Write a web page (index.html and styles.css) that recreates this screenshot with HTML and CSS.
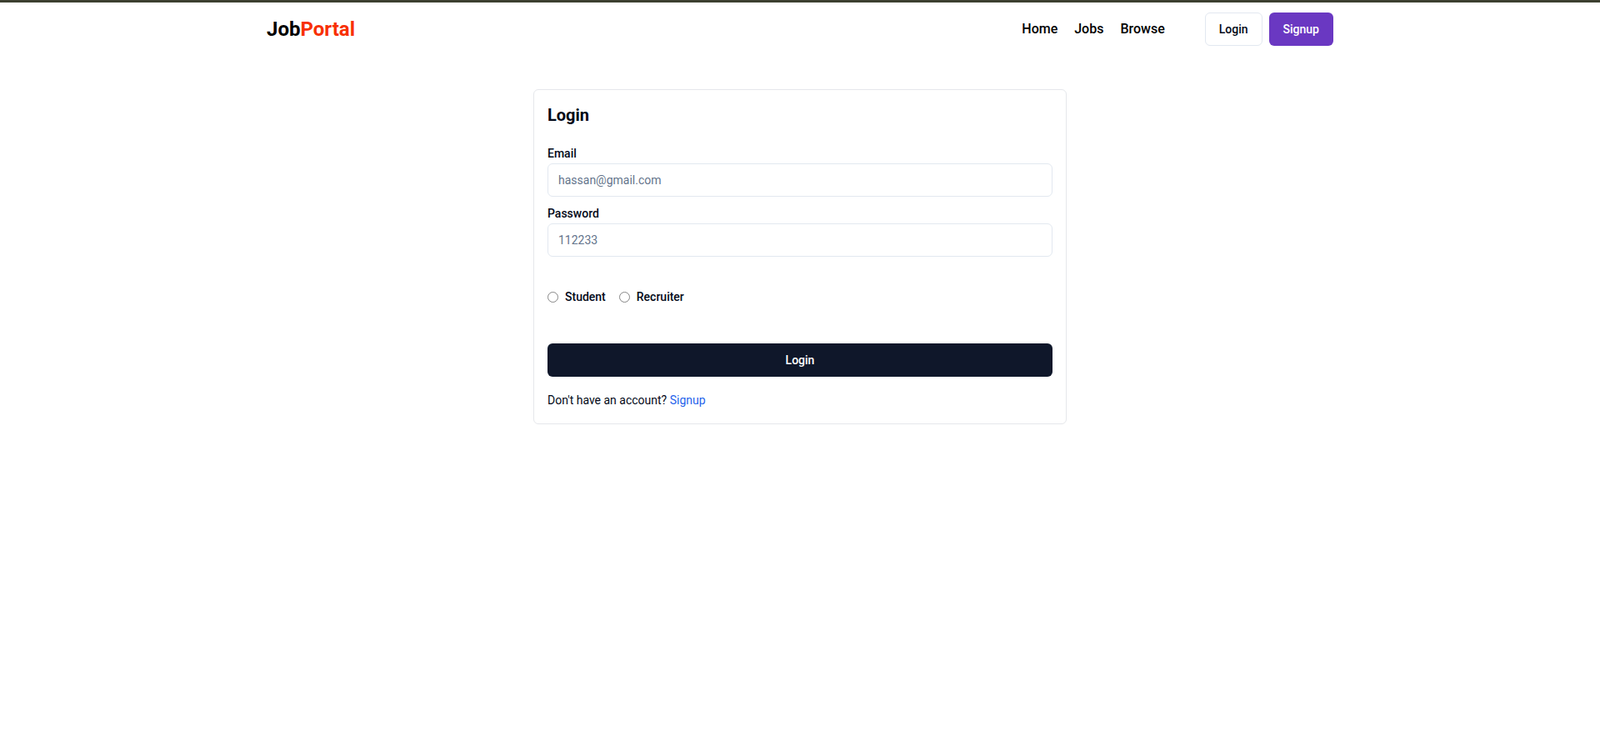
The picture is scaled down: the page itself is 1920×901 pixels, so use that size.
FILE: index.html
```html
<!DOCTYPE html>
<html lang="en">
<head>
<meta charset="UTF-8" />
<meta name="viewport" content="width=device-width, initial-scale=1" />
<title>JobPortal - Login</title>
<link rel="stylesheet" href="styles.css">
</head>
<body>

<div class="topbar"></div>

<header class="navbar">
  <h1 class="logo">Job<span>Portal</span></h1>
  <div class="nav-right">
    <ul class="nav-links">
      <li><a href="#">Home</a></li>
      <li><a href="#">Jobs</a></li>
      <li><a href="#">Browse</a></li>
    </ul>
    <div class="nav-buttons">
      <a href="#" class="btn btn-outline">Login</a>
      <a href="#" class="btn btn-purple">Signup</a>
    </div>
  </div>
</header>

<main class="page">
  <form class="login-form">
    <h2 class="form-title">Login</h2>

    <div class="field">
      <label for="email">Email</label>
      <input id="email" type="email" class="input" placeholder="hassan@gmail.com">
    </div>

    <div class="field">
      <label for="password">Password</label>
      <input id="password" type="password" class="input" placeholder="112233">
    </div>

    <div class="role-row">
      <div class="radio-group">
        <label class="radio-item">
          <input type="radio" name="role" value="student">
          <span>Student</span>
        </label>
        <label class="radio-item">
          <input type="radio" name="role" value="recruiter">
          <span>Recruiter</span>
        </label>
      </div>
    </div>

    <button type="submit" class="btn btn-dark">Login</button>

    <span class="switch-text">Don't have an account? <a href="#">Signup</a></span>
  </form>
</main>

</body>
</html>
```

FILE: styles.css
```css
* {
  box-sizing: border-box;
}
body {
  margin: 0;
  background: #fff;
  color: #020817;
  font-family: Roboto, 'Liberation Sans', sans-serif;
  line-height: 1.5;
}
a {
  color: inherit;
  text-decoration: none;
}

/* thin dark strip at the very top */
.topbar {
  height: 3px;
  background: #3c3f30;
}

/* header */
.navbar {
  max-width: 1280px;
  height: 64px;
  margin: 0 auto;
  display: flex;
  align-items: center;
  justify-content: space-between;
}
.logo {
  margin: 0;
  font-size: 24px;
  line-height: 32px;
  font-weight: 700;
  color: #000;
}
.logo span {
  color: #f83002;
}
.nav-right {
  display: flex;
  align-items: center;
  gap: 48px;
}
.nav-links {
  display: flex;
  gap: 20px;
  margin: 0;
  padding: 0;
  list-style: none;
  font-weight: 500;
  color: #000;
}
.nav-buttons {
  display: flex;
  gap: 8px;
}

.btn {
  display: inline-flex;
  align-items: center;
  justify-content: center;
  height: 40px;
  padding: 0 16px;
  border-radius: 6px;
  font-family: inherit;
  font-size: 14px;
  font-weight: 500;
  border: 1px solid transparent;
  cursor: pointer;
}
.btn-outline {
  background: #fff;
  border-color: #e2e8f0;
  color: #020817;
}
.btn-purple {
  background: #6a38c2;
  color: #fff;
}
.btn-dark {
  display: flex;
  width: 100%;
  margin: 16px 0;
  background: #0f172a;
  color: #fff;
}

/* form card */
.page {
  max-width: 1280px;
  margin: 0 auto;
  display: flex;
  justify-content: center;
}
.login-form {
  width: 50%;
  margin: 40px 0;
  padding: 16px;
  border: 1px solid #e5e7eb;
  border-radius: 6px;
}
.form-title {
  margin: 0 0 20px;
  font-size: 20px;
  line-height: 28px;
  font-weight: 700;
}
.field {
  margin: 8px 0;
}
.field label {
  font-size: 14px;
  font-weight: 500;
  line-height: 1;
}
.input {
  display: flex;
  width: 100%;
  height: 40px;
  padding: 8px 12px;
  border: 1px solid #e2e8f0;
  border-radius: 6px;
  font-family: inherit;
  font-size: 14px;
  color: #020817;
  background: #fff;
}
.input::placeholder {
  color: #64748b;
}

.role-row {
  display: flex;
  align-items: center;
  justify-content: space-between;
}
.radio-group {
  display: flex;
  align-items: center;
  gap: 16px;
  margin: 20px 0;
  height: 40px;
}
.radio-item {
  display: flex;
  align-items: center;
  gap: 8px;
  font-size: 14px;
  font-weight: 500;
  cursor: pointer;
}
.radio-item input {
  appearance: none;
  width: 13px;
  height: 13px;
  margin: 0;
  border: 1px solid #858585;
  border-radius: 50%;
  background: #fff;
  cursor: pointer;
}
.radio-item input:checked {
  border: 4px solid #0075ff;
}

.switch-text {
  font-size: 14px;
}
.switch-text a {
  color: #2563eb;
}
```
